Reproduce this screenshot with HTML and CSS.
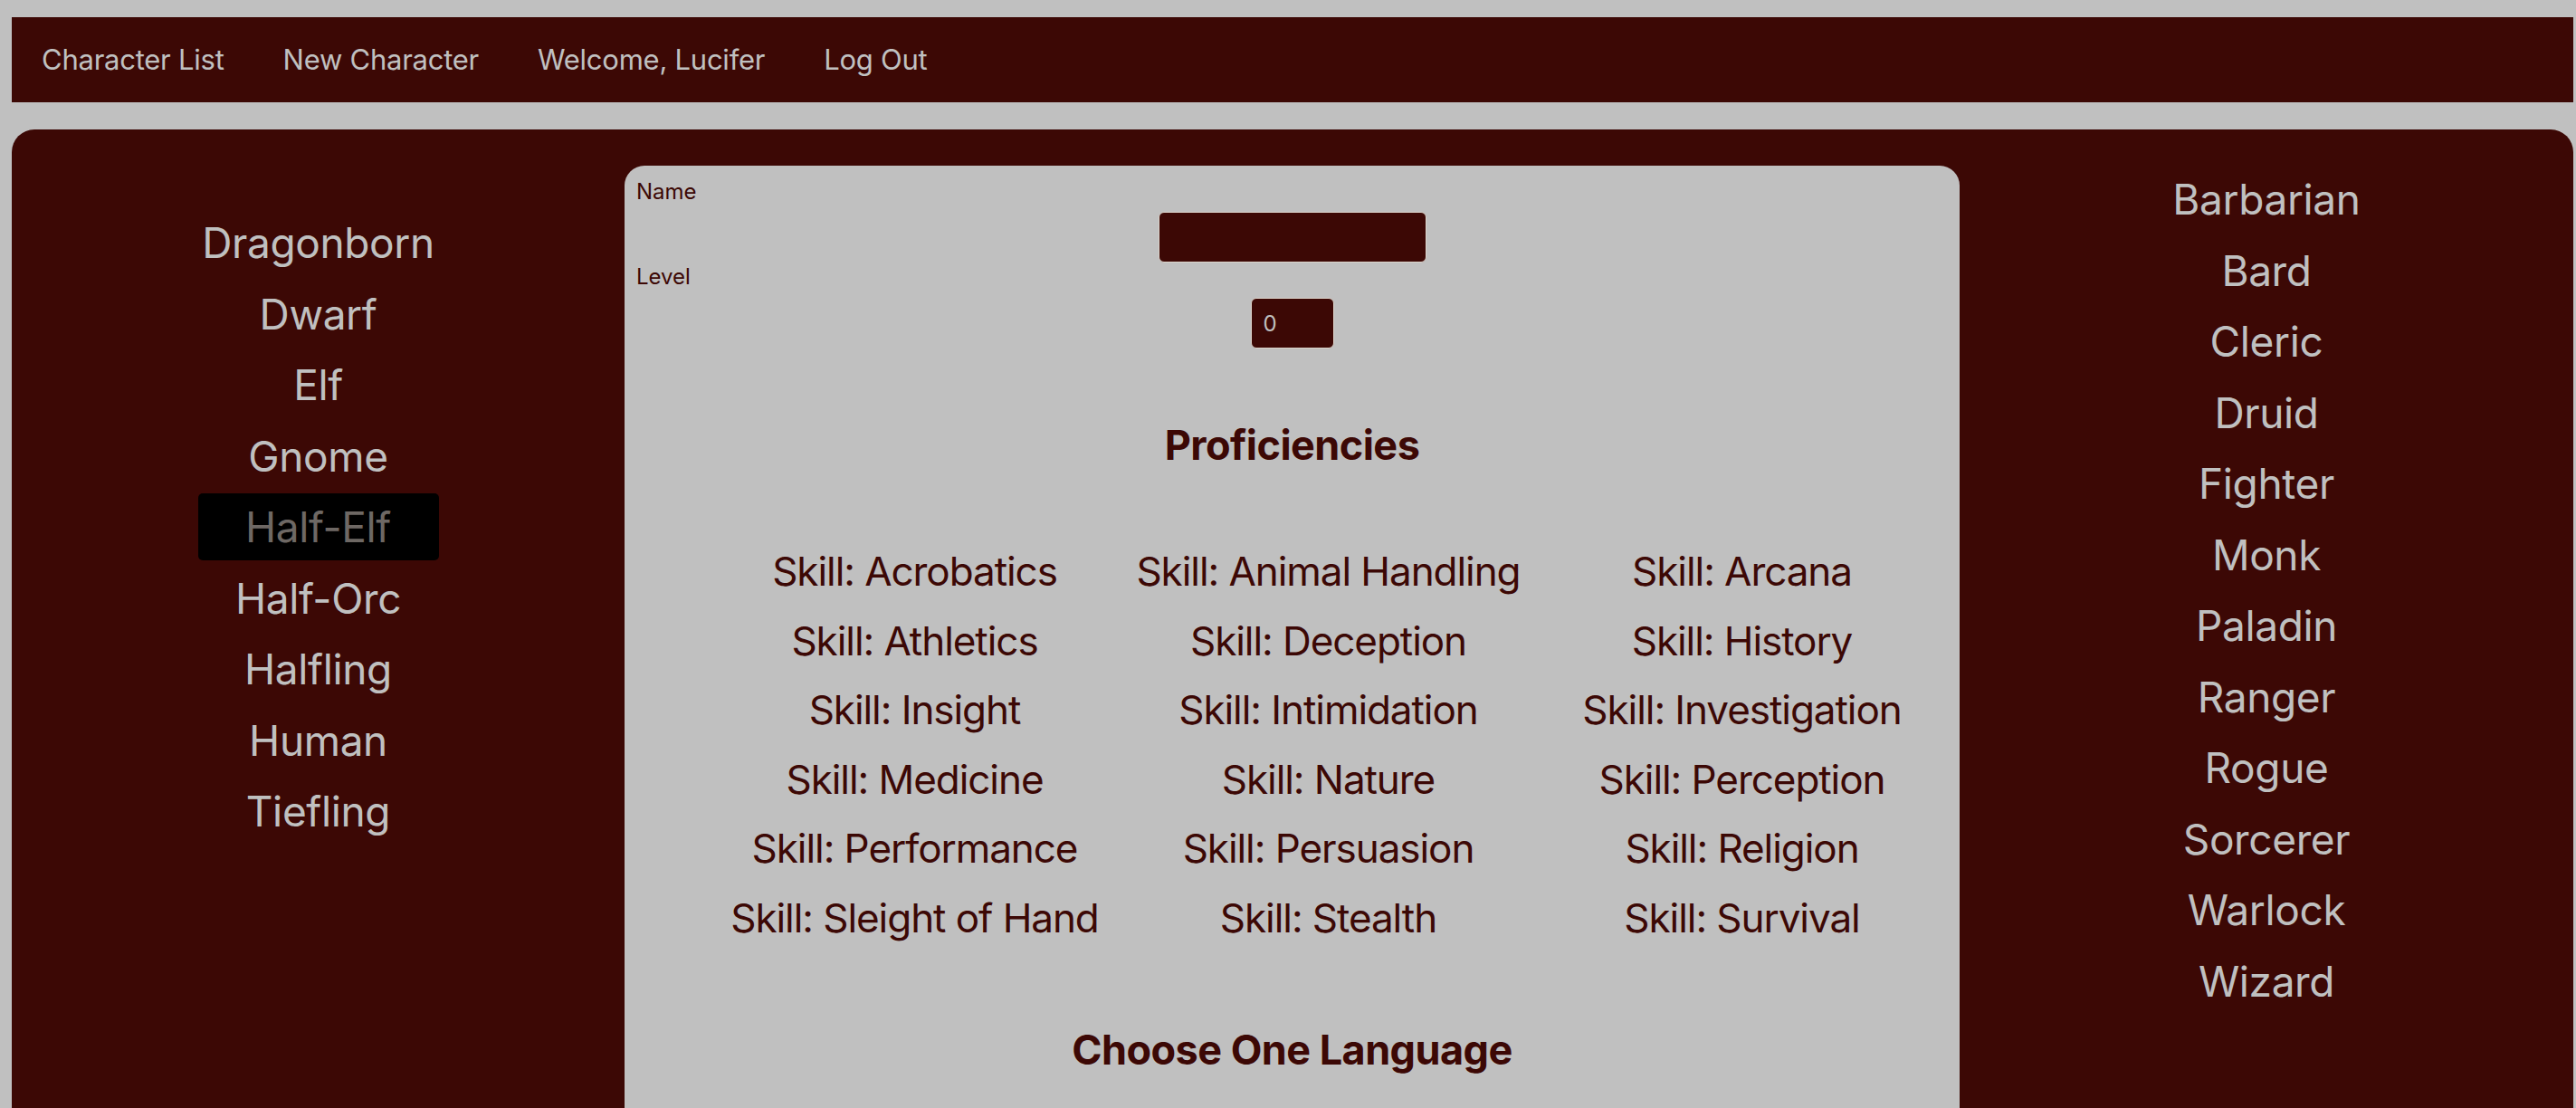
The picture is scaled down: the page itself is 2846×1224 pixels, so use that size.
FILE: index.html
```html
<!DOCTYPE html>
<html lang="en">
<head>
<meta charset="utf-8">
<title>New Character</title>
<link rel="stylesheet" href="styles.css">
</head>
<body>
<nav class="topnav">
  <a class="nav-link" href="#">Character List</a>
  <a class="nav-link" href="#">New Character</a>
  <a class="nav-link" href="#">Welcome, Lucifer</a>
  <a class="nav-link" href="#">Log Out</a>
</nav>
<main class="builder">
  <ul class="pick-list races">
    <li class="pick">Dragonborn</li>
    <li class="pick">Dwarf</li>
    <li class="pick">Elf</li>
    <li class="pick">Gnome</li>
    <li class="pick selected">Half-Elf</li>
    <li class="pick">Half-Orc</li>
    <li class="pick">Halfling</li>
    <li class="pick">Human</li>
    <li class="pick">Tiefling</li>
  </ul>
  <section class="card">
    <label class="field-label" for="name">Name</label>
    <input class="field name-field" id="name" type="text">
    <label class="field-label" for="level">Level</label>
    <input class="field level-field" id="level" type="text" value="0">
    <h2 class="section-title prof-title">Proficiencies</h2>
    <div class="skills">
      <div class="skill">Skill: Acrobatics</div>
      <div class="skill">Skill: Animal Handling</div>
      <div class="skill">Skill: Arcana</div>
      <div class="skill">Skill: Athletics</div>
      <div class="skill">Skill: Deception</div>
      <div class="skill">Skill: History</div>
      <div class="skill">Skill: Insight</div>
      <div class="skill">Skill: Intimidation</div>
      <div class="skill">Skill: Investigation</div>
      <div class="skill">Skill: Medicine</div>
      <div class="skill">Skill: Nature</div>
      <div class="skill">Skill: Perception</div>
      <div class="skill">Skill: Performance</div>
      <div class="skill">Skill: Persuasion</div>
      <div class="skill">Skill: Religion</div>
      <div class="skill">Skill: Sleight of Hand</div>
      <div class="skill">Skill: Stealth</div>
      <div class="skill">Skill: Survival</div>
    </div>
    <h2 class="section-title lang-title">Choose One Language</h2>
  </section>
  <ul class="pick-list classes">
    <li class="pick">Barbarian</li>
    <li class="pick">Bard</li>
    <li class="pick">Cleric</li>
    <li class="pick">Druid</li>
    <li class="pick">Fighter</li>
    <li class="pick">Monk</li>
    <li class="pick">Paladin</li>
    <li class="pick">Ranger</li>
    <li class="pick">Rogue</li>
    <li class="pick">Sorcerer</li>
    <li class="pick">Warlock</li>
    <li class="pick">Wizard</li>
  </ul>
</main>
</body>
</html>
```
FILE: styles.css
```css
* {
  box-sizing: border-box;
}

html, body {
  height: 100%;
}

body {
  margin: 0;
  padding: 19px 3px 0 13px;
  background: #c0c0c0;
  font-family: Inter, "Noto Sans", sans-serif;
  overflow: hidden;
}

.topnav {
  height: 94px;
  background: #3c0805;
  display: flex;
  align-items: center;
  gap: 65px;
  padding-left: 33px;
}

.nav-link {
  color: #c0c0c0;
  text-decoration: none;
  font-size: 31px;
  line-height: 40px;
  letter-spacing: -0.008em;
}

.builder {
  margin-top: 30px;
  background: #3c0805;
  border-radius: 25px 25px 0 0;
  display: grid;
  grid-template-columns: 677px 1475px 1fr;
  align-items: start;
  padding-top: 40px;
  min-height: 1200px;
}

.pick-list {
  list-style: none;
  margin: 0;
  padding: 0;
  display: flex;
  flex-direction: column;
  align-items: center;
  gap: 4.5px;
}

.races {
  padding-top: 48px;
}

.pick {
  width: 266px;
  height: 74px;
  line-height: 74px;
  text-align: center;
  color: #c0c0c0;
  font-size: 46px;
  letter-spacing: -0.008em;
  border-radius: 5px;
}

.pick.selected {
  background: #000;
  color: #6e6864;
}

.card {
  background: #c0c0c0;
  border-radius: 22px 22px 0 0;
  padding: 14px 13px 0;
  min-height: 1100px;
  display: flex;
  flex-direction: column;
  color: #3c0805;
}

.field-label {
  display: block;
  font-size: 24px;
  line-height: 30px;
  color: #3c0805;
}

.field {
  display: block;
  align-self: center;
  height: 56px;
  background: #3c0805;
  border: 1px solid #ddd5cc;
  border-radius: 6px;
  color: #c0c0c0;
  font-family: Inter, "Noto Sans", sans-serif;
  font-size: 24px;
  padding: 0 13px;
  outline: none;
}

.name-field {
  width: 296px;
  margin-top: 7px;
  margin-bottom: 1px;
}

.level-field {
  width: 92px;
  margin-top: 8px;
}

.section-title {
  margin: 0;
  text-align: center;
  font-size: 45px;
  line-height: 54px;
  font-weight: 700;
  letter-spacing: -0.012em;
  color: #3c0805;
}

.prof-title {
  margin-top: 80px;
}

.skills {
  margin-top: 74px;
  margin-left: 79px;
  display: grid;
  grid-template-columns: repeat(3, 457px);
}

.skill {
  text-align: center;
  font-size: 44px;
  line-height: 76.6px;
  letter-spacing: -0.024em;
  color: #3c0805;
  white-space: nowrap;
}

.lang-title {
  margin-top: 80px;
}
```
